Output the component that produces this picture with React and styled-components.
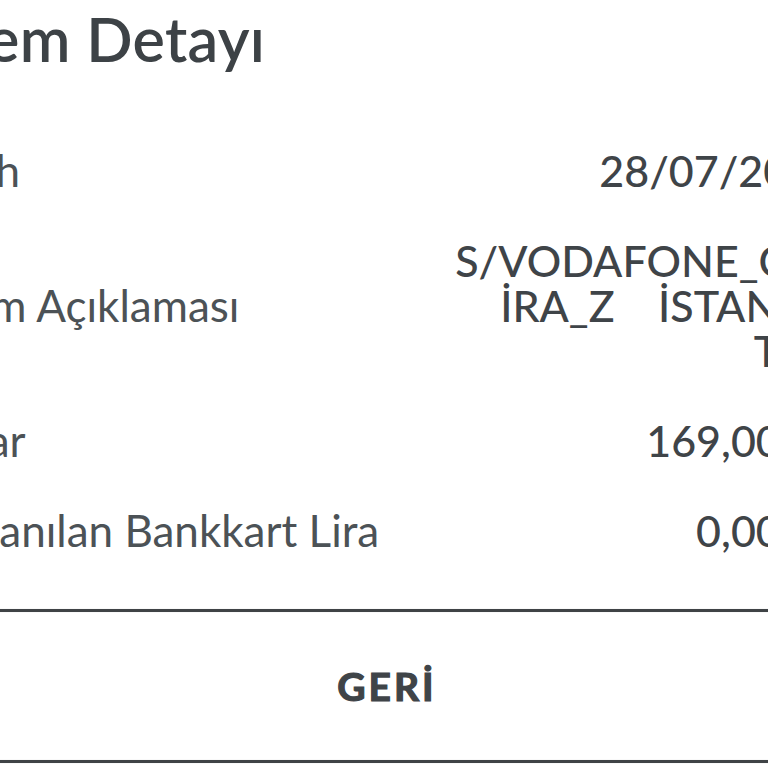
import React from 'react';
import styled, { createGlobalStyle } from 'styled-components';

const Global = createGlobalStyle`
  html, body { margin: 0; padding: 0; background: #fff; }
  body { font-family: Lato, "Open Sans", sans-serif; }
`;

const Page = styled.div`
  width: 768px;
  height: 768px;
  overflow: hidden;
  background: #fff;
`;

const Sheet = styled.div`
  width: 912px;
  margin-left: -74px;
  display: flex;
  flex-direction: column;
`;

const Title = styled.h1`
  margin: 0;
  padding-top: 3px;
  padding-left: 2px;
  font-size: 61px;
  line-height: 72px;
  font-weight: 600;
  color: #3d4246;
  letter-spacing: 0.3px;
`;

const Details = styled.div`
  display: flex;
  flex-direction: column;
  gap: 45px;
  margin-top: 73px;
`;

const Row = styled.div`
  display: flex;
  justify-content: space-between;
  align-items: center;
  font-size: 44px;
  line-height: 45px;
`;

const Label = styled.span`
  color: #4c5256;
  font-weight: 400;
  white-space: nowrap;
`;

const Value = styled.span`
  color: #3f4448;
  font-size: 43px;
  font-weight: 500;
  text-align: right;
  white-space: nowrap;
`;

const Line = styled.span`
  display: block;
  white-space: pre;
`;

const Divider = styled.hr`
  margin: 0;
  border: 0;
  height: 3px;
  background: #3f4346;
  box-shadow: 0 0 1px rgba(0, 0, 0, 0.25);
`;

const BackButton = styled.button`
  display: block;
  width: 100%;
  height: 148px;
  margin: 0;
  padding: 0 0 0 10px;
  border: 0;
  background: transparent;
  font-family: Lato, sans-serif;
  font-size: 39px;
  font-weight: 700;
  color: #3f4448;
  letter-spacing: 3px;
  -webkit-text-stroke: 1.2px #3f4448;
`;

const Footer = styled.div`
  margin-top: 56px;
  display: flex;
  flex-direction: column;
`;

const rows = [
  { label: 'Tarih', value: ['28/07/2023'] },
  { label: 'İşlem Açıklaması', value: ['S/VODAFONE_CEP', 'İRA_Z    İSTANBU', 'TUR'] },
  { label: 'Tutar', value: ['169,00 TL'] },
  { label: 'Kullanılan Bankkart Lira', value: ['0,00 TL'] },
];

export default function App() {
  return (
    <Page>
      <Global />
      <Sheet>
        <Title>İşlem Detayı</Title>
        <Details>
          {rows.map((r) => (
            <Row key={r.label}>
              <Label>{r.label}</Label>
              <Value>
                {r.value.map((v) => (
                  <Line key={v}>{v}</Line>
                ))}
              </Value>
            </Row>
          ))}
        </Details>
        <Footer>
          <Divider />
          <BackButton>GERİ</BackButton>
          <Divider />
        </Footer>
      </Sheet>
    </Page>
  );
}
